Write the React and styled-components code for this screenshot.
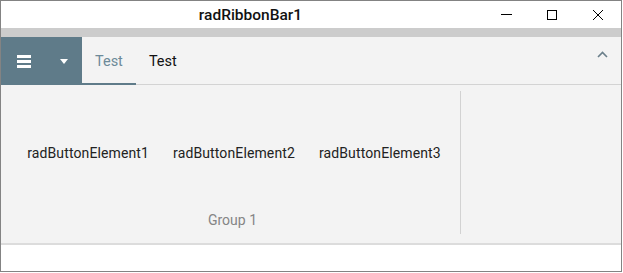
import React from "react";
import styled, { createGlobalStyle } from "styled-components";

const Global = createGlobalStyle`
  html, body { margin: 0; padding: 0; background: #ffffff; }
  body { font-family: Roboto, "Liberation Sans", sans-serif; }
`;

const Window = styled.div`
  box-sizing: border-box;
  width: 622px;
  height: 272px;
  border: 1px solid #838383;
  background: #ffffff;
  display: flex;
  flex-direction: column;
`;

const TitleBar = styled.div`
  height: 27px;
  display: flex;
  align-items: stretch;
  background: #ffffff;
`;

const Title = styled.div`
  flex: 1;
  display: flex;
  align-items: center;
  justify-content: center;
  padding-left: 17px;
  font-family: Roboto, sans-serif;
  font-weight: 500;
  font-size: 15.5px;
  color: #111111;
`;

const CtrlButton = styled.div`
  width: 46px;
  display: flex;
  align-items: center;
  justify-content: center;
  color: #000;
`;

const Strip = styled.div`
  height: 9px;
  background: #cccccc;
`;

const TabRow = styled.div`
  height: 48px;
  box-sizing: border-box;
  border-bottom: 1px solid #d3d3d3;
  background: #f3f3f3;
  display: flex;
  align-items: stretch;
`;

const AppButton = styled.div`
  width: 81px;
  margin-bottom: -1px;
  background: #5f7b89;
  display: flex;
  align-items: center;
  padding-left: 16px;
  box-sizing: border-box;
  gap: 29px;
`;

const Hamburger = styled.div`
  display: flex;
  flex-direction: column;
  gap: 2px;
  margin-top: 1px;
  span {
    display: block;
    width: 14px;
    height: 3px;
    background: #ffffff;
  }
`;

const Tab = styled.div`
  position: relative;
  padding: 0 13px;
  display: flex;
  align-items: center;
  padding-top: 1px;
  font-size: 14.5px;
  color: ${(p) => (p.$active ? "#6d8a99" : "#111111")};
  &::after {
    content: "";
    display: ${(p) => (p.$active ? "block" : "none")};
    position: absolute;
    left: 0;
    right: 0;
    bottom: -1px;
    height: 2px;
    background: #5f7b89;
  }
`;

const Spacer = styled.div`
  flex: 1;
`;

const Collapse = styled.div`
  width: 30px;
  display: flex;
  justify-content: flex-start;
  padding-top: 14px;
  box-sizing: border-box;
  padding-left: 6px;
`;

const Content = styled.div`
  height: 160px;
  box-sizing: border-box;
  background: #f3f3f3;
  padding: 6px 0 9px 4px;
  display: flex;
  border-bottom: 2px solid #dcdcdc;
`;

const Group = styled.div`
  width: 455px;
  display: flex;
  flex-direction: column;
  border-right: 1px solid #d2d2d2;
`;

const ButtonsRow = styled.div`
  height: 120px;
  box-sizing: border-box;
  padding-top: 4px;
  padding-left: 3px;
  display: flex;
  align-items: center;
  justify-content: center;
`;

const RibbonButton = styled.div`
  padding: 0 12px;
  font-size: 14px;
  letter-spacing: 0.12px;
  color: #222222;
  white-space: nowrap;
`;

const GroupLabel = styled.div`
  height: 18px;
  line-height: 18px;
  text-align: center;
  font-size: 14px;
  color: #858585;
`;

const Footer = styled.div`
  flex: 1;
  background: #ffffff;
`;

export default function App() {
  return (
    <>
      <Global />
      <Window>
        <TitleBar>
          <Title>radRibbonBar1</Title>
          <CtrlButton>
            <svg width="11" height="11" viewBox="0 0 11 11">
              <line x1="0" y1="5.5" x2="11" y2="5.5" stroke="#000" strokeWidth="1" />
            </svg>
          </CtrlButton>
          <CtrlButton>
            <svg width="10" height="10" viewBox="0 0 10 10">
              <rect x="0.5" y="0.5" width="9" height="9" fill="none" stroke="#000" strokeWidth="1" />
            </svg>
          </CtrlButton>
          <CtrlButton>
            <svg width="10" height="10" viewBox="0 0 10 10">
              <path d="M0 0 L10 10 M10 0 L0 10" stroke="#000" strokeWidth="1" />
            </svg>
          </CtrlButton>
        </TitleBar>
        <Strip />
        <TabRow>
          <AppButton>
            <Hamburger>
              <span />
              <span />
              <span />
            </Hamburger>
            <svg width="8" height="5" viewBox="0 0 8 5">
              <path d="M0 0 L8 0 L4 5 Z" fill="#ffffff" />
            </svg>
          </AppButton>
          <Tab $active>Test</Tab>
          <Tab>Test</Tab>
          <Spacer />
          <Collapse>
            <svg width="11" height="7" viewBox="0 0 11 7">
              <polyline points="1,6 5.5,1.5 10,6" fill="none" stroke="#6a7f8a" strokeWidth="1.6" />
            </svg>
          </Collapse>
        </TabRow>
        <Content>
          <Group>
            <ButtonsRow>
              <RibbonButton>radButtonElement1</RibbonButton>
              <RibbonButton>radButtonElement2</RibbonButton>
              <RibbonButton>radButtonElement3</RibbonButton>
            </ButtonsRow>
            <GroupLabel>Group 1</GroupLabel>
          </Group>
        </Content>
        <Footer />
      </Window>
    </>
  );
}
